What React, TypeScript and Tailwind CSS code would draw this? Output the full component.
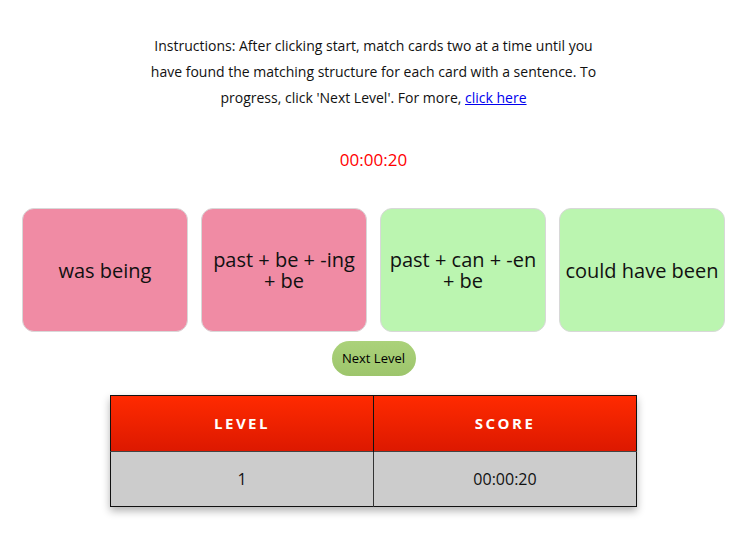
import React from 'react';

type Card = { text: string; matched: boolean };

const cards: Card[] = [
  { text: 'was being', matched: false },
  { text: 'past + be + -ing + be', matched: false },
  { text: 'past + can + -en + be', matched: true },
  { text: 'could have been', matched: true },
];

function App() {
  return (
    <div className="min-h-screen bg-white text-black" style={{ fontFamily: '"Open Sans", "Noto Sans", sans-serif' }}>
      <div className="pt-[33px] flex justify-center">
        <p className="w-[470px] text-center text-[14px] leading-[26px] text-[#111]">
          Instructions: After clicking start, match cards two at a time until you have found the matching structure for each card with a sentence. To
          progress, click 'Next Level'. For more,{' '}
          <a href="#" className="text-[#0000ee] underline">
            click here
          </a>
        </p>
      </div>

      <div className="mt-[37px] text-center text-[17px] leading-[24px] text-[#ff0000]">00:00:20</div>

      <div className="mt-[36px] flex justify-center gap-[13px]">
        {cards.map((c) => (
          <div
            key={c.text}
            className={
              'w-[166px] h-[124px] rounded-[12px] border border-[#d8d8d8] flex items-center justify-center text-center px-1 text-[20px] leading-[21px] text-[#111] ' +
              (c.matched ? 'bg-[#bbf5b0]' : 'bg-[#f08ba4]')
            }
          >
            {c.text}
          </div>
        ))}
      </div>

      <div className="mt-[9px] flex justify-center">
        <button className="w-[84px] h-[35px] rounded-full bg-gradient-to-b from-[#abd27a] to-[#9dc56c] text-[13px] text-black">
          Next Level
        </button>
      </div>

      <div className="mt-[19px] flex justify-center">
        <table className="w-[527px] border-collapse border border-[#111] shadow-[0_4px_8px_rgba(0,0,0,0.3)]">
          <thead>
            <tr className="h-[56px] bg-gradient-to-b from-[#ff2a00] to-[#dc1800]">
              <th className="w-1/2 border-r border-[#111] text-white font-bold text-[15px] tracking-[2.5px]">LEVEL</th>
              <th className="w-1/2 text-white font-bold text-[15px] tracking-[2.5px]">SCORE</th>
            </tr>
          </thead>
          <tbody>
            <tr className="h-[55px] bg-[#cccccc] border-t border-[#444]">
              <td className="border-r border-[#333] text-center text-[16px] text-[#111]">1</td>
              <td className="text-center text-[16px] text-[#111]">00:00:20</td>
            </tr>
          </tbody>
        </table>
      </div>
    </div>
  );
}

export default App;
